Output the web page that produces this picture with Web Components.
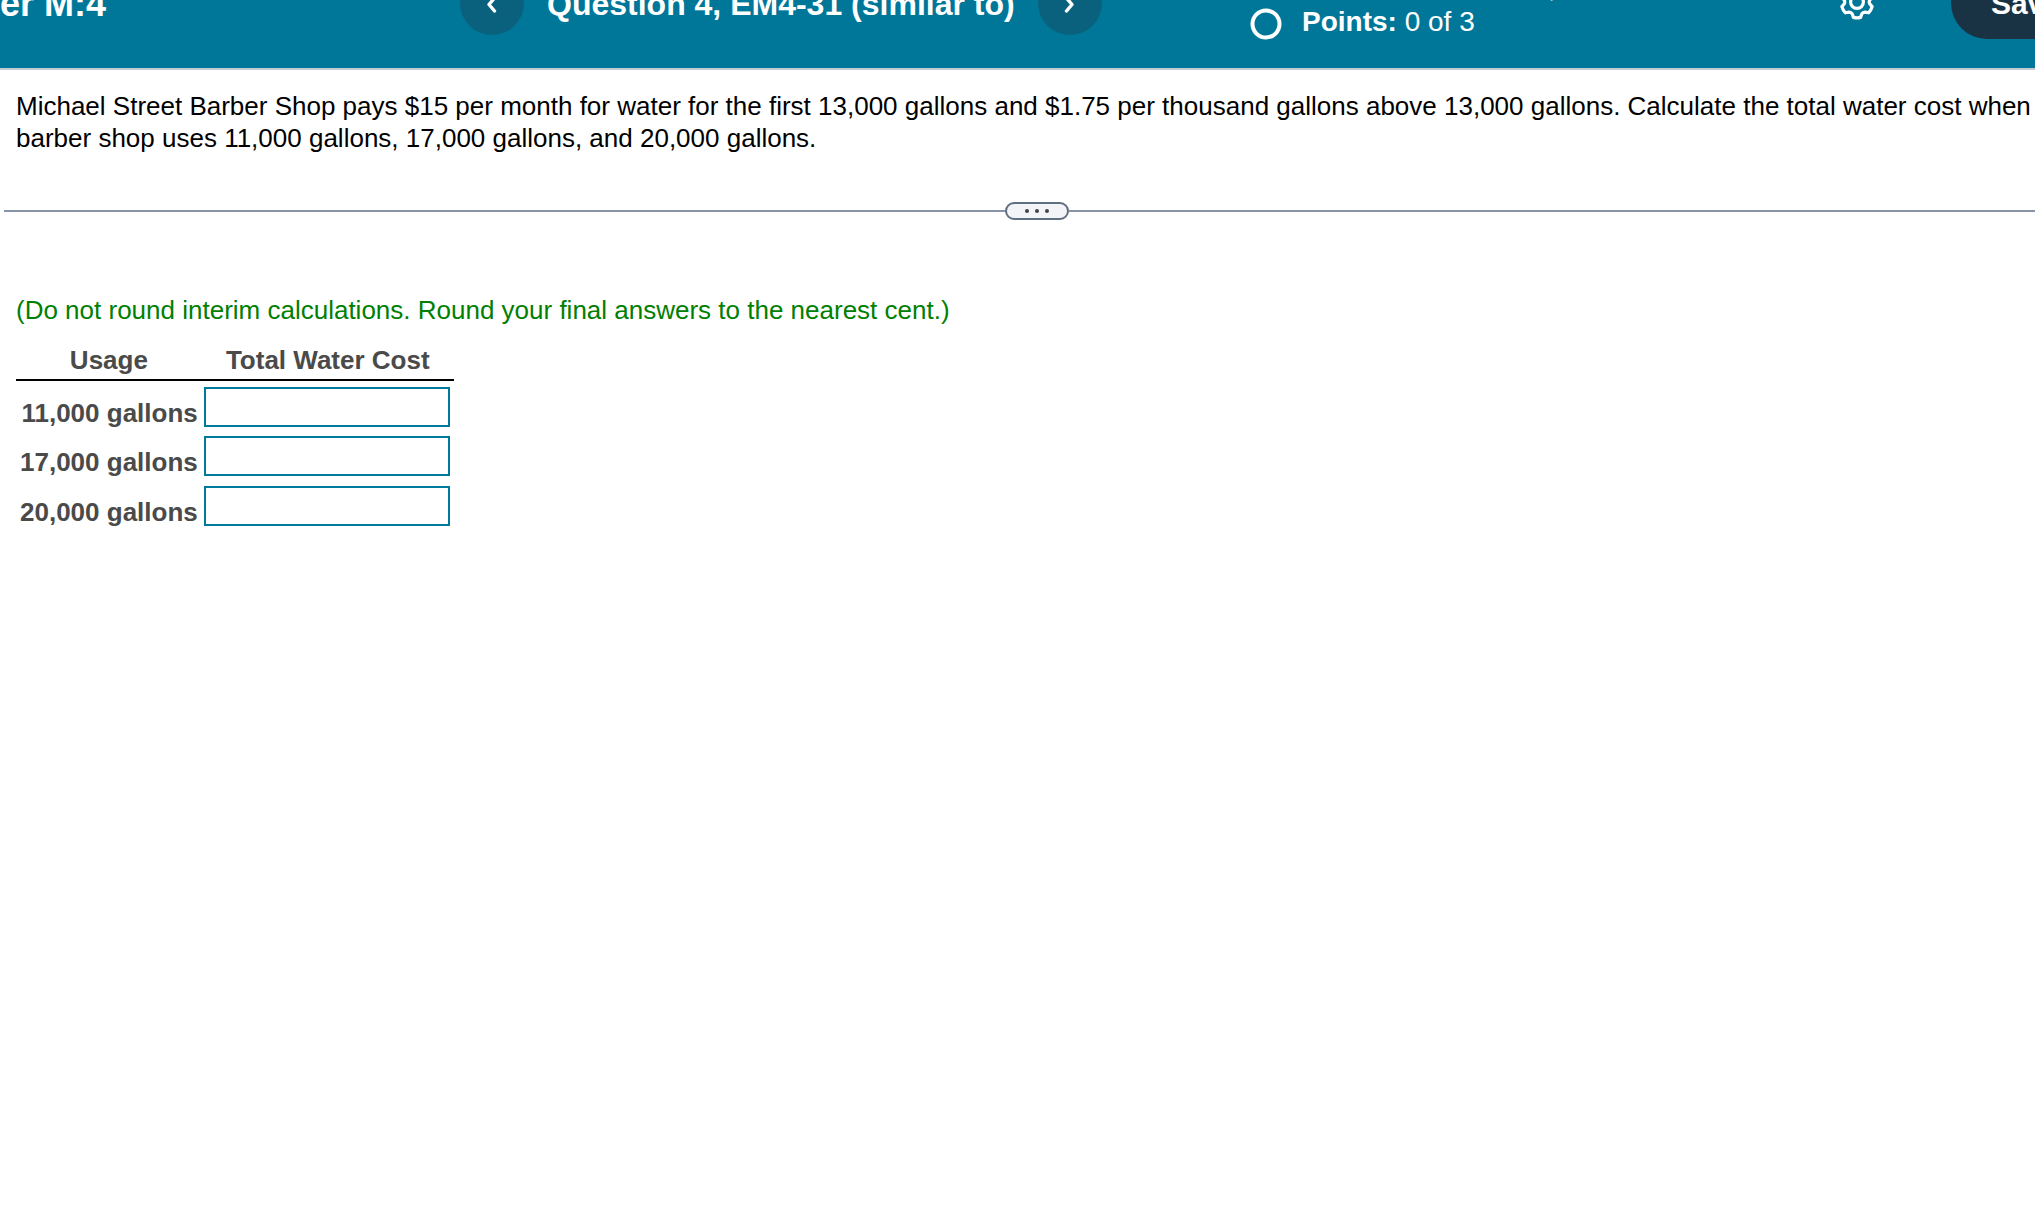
<!DOCTYPE html>
<html lang="en">
<head>
<meta charset="utf-8">
<title>Question 4, EM4-31</title>
<style>
  body { margin: 0; background: #fff; font-family: "Liberation Sans", Arial, sans-serif; font-size: 26px; line-height: 32px; color: #000; overflow-x: hidden; }
</style>
</head>
<body>
<exercise-page></exercise-page>
<script>
class NavButton extends HTMLElement {
  constructor() {
    super();
    const next = this.getAttribute('direction') === 'next';
    this.attachShadow({ mode: 'open' }).innerHTML = `
      <style>
        :host { display: block; flex: none; }
        button { display: flex; align-items: center; justify-content: center; width: 64px; height: 64px; padding: 0; border: 0; border-radius: 50%; background: #0a617d; color: #fff; }
      </style>
      <button type="button" aria-label="${next ? 'Next' : 'Previous'} question">
        <svg width="20" height="24" viewBox="0 0 20 24" fill="none" stroke="currentColor" stroke-width="3.4" stroke-linecap="round" stroke-linejoin="round"><path d="${next ? 'M6.500 7l5.500 6.500L6.500 20' : 'M12.500 7L7 13.500l5.500 6.500'}"/></svg>
      </button>`;
  }
}
customElements.define('nav-button', NavButton);

// Outline of a six-toothed gear centred on (18, 18).
function gearPath() {
  const at = (deg, r) => {
    const a = deg * Math.PI / 180;
    return (18 + r * Math.cos(a)).toFixed(2) + ' ' + (18 + r * Math.sin(a)).toFixed(2);
  };
  let d = '';
  for (let k = 0; k < 6; k++) {
    const t = 90 + 60 * k;
    d += (k ? 'L' : 'M') + at(t - 13, 15.8) + 'Q' + at(t, 16.4) + ' ' + at(t + 13, 15.8)
       + 'L' + at(t + 22, 12.8) + 'Q' + at(t + 30, 11.8) + ' ' + at(t + 38, 12.8);
  }
  return d + 'Z';
}

class ExerciseHeader extends HTMLElement {
  constructor() {
    super();
    this.attachShadow({ mode: 'open' }).innerHTML = `
      <style>
        :host { display: flex; align-items: flex-end; height: 68px; overflow: hidden; background: #007799; border-bottom: 2px solid #c4cbd3; color: #fff; white-space: nowrap; }
        h1, h2 { margin: 0; padding-top: 2px; line-height: 40px; font-weight: bold; }
        h1 { font-size: 36px; }
        h2 { font-size: 32px; }
        .group { display: flex; align-items: center; height: 64px; margin-bottom: 33px; flex: none; }
        .set { flex: 0 0 460px; }
        .question { flex: 0 0 790px; gap: 23px; }
        .scores { flex: 1 1 0; display: flex; align-items: flex-end; gap: 20px; margin-bottom: 28px; }
        .scores svg { flex: none; }
        .lines { font-size: 28px; line-height: 34px; margin-bottom: 1px; }
        .lines p { margin: 0; }
        .score { padding-left: 246px; }
        .actions { gap: 76px; margin-right: -66px; }
        .settings { display: flex; padding: 0 0 2px; border: 0; background: none; color: #fff; }
        .save { height: 72px; padding: 2px 40px 0; border: 0; border-radius: 36px; background: #1a3344; color: #fff; font: bold 30px/40px "Liberation Sans", Arial, sans-serif; }
      </style>
      <div class="group set"><h1>er M:4</h1></div>
      <div class="group question">
        <nav-button direction="previous"></nav-button>
        <h2>Question 4, EM4-31 (similar to)</h2>
        <nav-button direction="next"></nav-button>
      </div>
      <div class="scores">
        <svg width="32" height="32" viewBox="0 0 32 32" fill="none" stroke="#fff" stroke-width="4"><circle cx="16" cy="16" r="13.500"/></svg>
        <div class="lines"><p class="score">,</p><p><b>Points:</b> 0 of 3</p></div>
      </div>
      <div class="group actions">
        <button type="button" class="settings" aria-label="Settings">
          <svg width="36" height="36" viewBox="0 0 36 36" fill="none" stroke="currentColor" stroke-width="3.2" stroke-linejoin="round"><circle cx="18" cy="18" r="6.400"/><path d="${gearPath()}"/></svg>
        </button>
        <button type="button" class="save">Save</button>
      </div>`;
  }
}
customElements.define('exercise-header', ExerciseHeader);

class PaneDivider extends HTMLElement {
  constructor() {
    super();
    this.attachShadow({ mode: 'open' }).innerHTML = `
      <style>
        :host { display: flex; align-items: center; margin: 0 -34px 0 4px; }
        span { flex: 1; height: 2px; background: #8893a7; }
        button { display: flex; align-items: center; justify-content: center; gap: 6px; box-sizing: border-box; width: 64px; height: 18px; padding: 0; border: 2px solid #5f6e80; border-radius: 9px; background: #f3f4f7; }
        i { width: 4px; height: 4px; border-radius: 50%; background: #444; }
      </style>
      <span></span><button type="button" aria-label="Resize panes"><i></i><i></i><i></i></button><span></span>`;
  }
}
customElements.define('pane-divider', PaneDivider);

class CostTable extends HTMLElement {
  constructor() {
    super();
    const rows = ['11,000', '17,000', '20,000'].map((n, i) => `
      <tr><th scope="row"><label for="cost${i}">${n} gallons</label></th><td><input id="cost${i}" type="text"></td></tr>`).join('');
    this.attachShadow({ mode: 'open' }).innerHTML = `
      <style>
        :host { display: block; }
        table { border-collapse: collapse; color: #4a4a4a; }
        th { font-weight: bold; padding: 0; }
        thead th { height: 38px; padding-right: 2px; border-bottom: 2px solid #000; }
        tbody th { box-sizing: border-box; height: 50px; text-align: right; padding: 14px 6px 0 4px; }
        td { box-sizing: border-box; height: 50px; padding: 2px 4px 0 0; }
        input { display: block; box-sizing: border-box; width: 246px; height: 40px; border: 2px solid #007a9c; background: #fff; padding: 0 6px; font: inherit; outline: 0; }
      </style>
      <table><thead><tr><th scope="col">Usage</th><th scope="col">Total Water Cost</th></tr></thead><tbody>${rows}</tbody></table>`;
  }
}
customElements.define('cost-table', CostTable);

class ExercisePage extends HTMLElement {
  constructor() {
    super();
    this.attachShadow({ mode: 'open' }).innerHTML = `
      <style>
        :host { display: block; }
        p { margin: 0; }
        .prompt { padding: 20px 0 48px 16px; }
        .answer { padding: 74px 16px 0; }
        .note { color: #008000; margin-bottom: 15px; }
      </style>
      <exercise-header></exercise-header>
      <main>
        <p class="prompt">Michael Street Barber Shop pays $15 per month for water for the first 13,000 gallons and $1.75 per thousand gallons above 13,000 gallons. Calculate the total water cost when barber shop uses 11,000 gallons, 17,000 gallons, and 20,000 gallons.</p>
        <pane-divider></pane-divider>
        <section class="answer">
          <p class="note">(Do not round interim calculations. Round your final answers to the nearest cent.)</p>
          <cost-table></cost-table>
        </section>
      </main>`;
  }
}
customElements.define('exercise-page', ExercisePage);
</script>
</body>
</html>
